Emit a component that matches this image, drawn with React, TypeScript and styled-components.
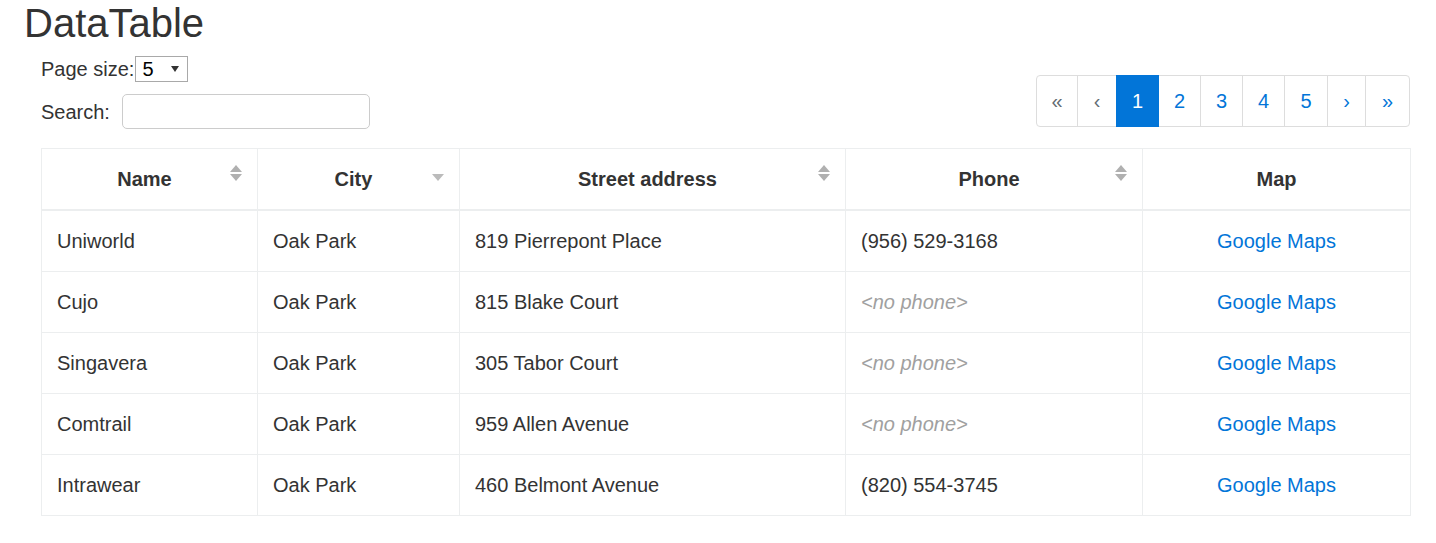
import styled, { createGlobalStyle } from "styled-components";

const GlobalStyle = createGlobalStyle`
  html, body {
    margin: 0;
    padding: 0;
    background: #fff;
  }
  body {
    font-family: "Liberation Sans", Arial, sans-serif;
    font-size: 20px;
    line-height: 1.5;
    color: #292b2c;
  }
`;

type Row = {
  name: string;
  city: string;
  street: string;
  phone: string | null;
};

const rows: Row[] = [
  { name: "Uniworld", city: "Oak Park", street: "819 Pierrepont Place", phone: "(956) 529-3168" },
  { name: "Cujo", city: "Oak Park", street: "815 Blake Court", phone: null },
  { name: "Singavera", city: "Oak Park", street: "305 Tabor Court", phone: null },
  { name: "Comtrail", city: "Oak Park", street: "959 Allen Avenue", phone: null },
  { name: "Intrawear", city: "Oak Park", street: "460 Belmont Avenue", phone: "(820) 554-3745" },
];

const Page = styled.div`
  padding: 0 26px 0 24px;
`;

const Title = styled.h1`
  margin: 0;
  font-size: 40px;
  font-weight: 400;
  line-height: 46px;
  color: #333;
`;

const Body = styled.div`
  padding-left: 17px;
`;

const TopBar = styled.div`
  display: flex;
  justify-content: space-between;
  align-items: flex-start;
`;

const Controls = styled.div`
  display: flex;
  flex-direction: column;
  padding-top: 10px;
`;

const SizeRow = styled.label`
  display: flex;
  align-items: center;
  height: 26px;
  color: #333;
`;

const SizeSelect = styled.div`
  position: relative;
  box-sizing: border-box;
  width: 53px;
  height: 26px;
  margin-left: 1px;
  border: 1px solid #a9a9a9;
  padding-left: 6px;
  line-height: 24px;
  font-size: 20px;
  color: #000;
  &::after {
    content: "";
    position: absolute;
    right: 8px;
    top: 9px;
    border-left: 4px solid transparent;
    border-right: 4px solid transparent;
    border-top: 6px solid #333;
  }
`;

const SearchRow = styled.label`
  display: flex;
  align-items: center;
  gap: 12px;
  margin-top: 12px;
  color: #333;
`;

const SearchInput = styled.input`
  box-sizing: border-box;
  width: 248px;
  height: 35px;
  border: 1px solid #ccc;
  border-radius: 5px;
  font-family: inherit;
  font-size: 20px;
  padding: 0 10px;
  outline: none;
`;

const Pager = styled.ul`
  display: flex;
  list-style: none;
  margin: 29px 0 0;
  padding: 0;
`;

const PageItem = styled.li<{ $active?: boolean; $muted?: boolean; $w: number }>`
  box-sizing: border-box;
  width: ${(p) => p.$w}px;
  height: 52px;
  display: flex;
  align-items: center;
  justify-content: center;
  border: 1px solid #ddd;
  margin-left: -1px;
  background: ${(p) => (p.$active ? "#0275d8" : "#fff")};
  border-color: ${(p) => (p.$active ? "#0275d8" : "#ddd")};
  color: ${(p) => (p.$active ? "#fff" : p.$muted ? "#636c72" : "#0275d8")};
  position: relative;
  z-index: ${(p) => (p.$active ? 1 : 0)};
  font-size: 20px;
  &:first-child {
    margin-left: 0;
    border-radius: 4px 0 0 4px;
  }
  &:last-child {
    border-radius: 0 4px 4px 0;
  }
`;

const Table = styled.table`
  width: 1369px;
  margin-top: 19px;
  border-collapse: collapse;
  table-layout: fixed;
  color: #333;
`;

const Th = styled.th<{ $w: number; $sortable?: boolean }>`
  position: relative;
  box-sizing: border-box;
  width: ${(p) => p.$w}px;
  border: 1px solid #eceeef;
  border-bottom: 2px solid #eceeef;
  padding: 15px ${(p) => (p.$sortable ? 25 : 15)}px 15px 15px;
  text-align: center;
  font-weight: 700;
  line-height: 30px;
`;

const SortIcon = styled.span<{ $mode: "both" | "down" }>`
  position: absolute;
  right: 15px;
  top: 16px;
  width: 12px;
  height: 16px;
  &::before,
  &::after {
    content: "";
    position: absolute;
    left: 0;
    border-left: 6px solid transparent;
    border-right: 6px solid transparent;
  }
  &::before {
    top: 0;
    border-bottom: 7px solid #b0b0b0;
    display: ${(p) => (p.$mode === "both" ? "block" : "none")};
  }
  &::after {
    top: 9px;
    border-top: 7px solid ${(p) => (p.$mode === "both" ? "#b0b0b0" : "#bbb")};
  }
`;

const Td = styled.td<{ $center?: boolean }>`
  border: 1px solid #eceeef;
  padding: 15px;
  line-height: 30px;
  text-align: ${(p) => (p.$center ? "center" : "left")};
`;

const NoPhone = styled.span`
  color: #a0a0a0;
  font-style: italic;
`;

const MapLink = styled.a`
  color: #0275d8;
  text-decoration: none;
`;

const pages = [
  { label: "«", w: 42, muted: true },
  { label: "‹", w: 40, muted: true },
  { label: "1", w: 43, active: true },
  { label: "2", w: 43 },
  { label: "3", w: 43 },
  { label: "4", w: 43 },
  { label: "5", w: 44 },
  { label: "›", w: 39 },
  { label: "»", w: 45 },
];

export default function App() {
  return (
    <Page>
      <GlobalStyle />
      <Title>DataTable</Title>
      <Body>
        <TopBar>
          <Controls>
            <SizeRow>
              Page size:<SizeSelect>5</SizeSelect>
            </SizeRow>
            <SearchRow>
              Search: <SearchInput type="text" />
            </SearchRow>
          </Controls>
          <Pager>
            {pages.map((p) => (
              <PageItem key={p.label} $w={p.w} $active={p.active} $muted={p.muted}>
                {p.label}
              </PageItem>
            ))}
          </Pager>
        </TopBar>
        <Table>
          <thead>
            <tr>
              <Th $w={216} $sortable>
                Name<SortIcon $mode="both" />
              </Th>
              <Th $w={202} $sortable>
                City<SortIcon $mode="down" />
              </Th>
              <Th $w={386} $sortable>
                Street address<SortIcon $mode="both" />
              </Th>
              <Th $w={297} $sortable>
                Phone<SortIcon $mode="both" />
              </Th>
              <Th $w={268}>Map</Th>
            </tr>
          </thead>
          <tbody>
            {rows.map((r) => (
              <tr key={r.name}>
                <Td>{r.name}</Td>
                <Td>{r.city}</Td>
                <Td>{r.street}</Td>
                <Td>{r.phone ? r.phone : <NoPhone>&lt;no phone&gt;</NoPhone>}</Td>
                <Td $center>
                  <MapLink href="#">Google Maps</MapLink>
                </Td>
              </tr>
            ))}
          </tbody>
        </Table>
      </Body>
    </Page>
  );
}
